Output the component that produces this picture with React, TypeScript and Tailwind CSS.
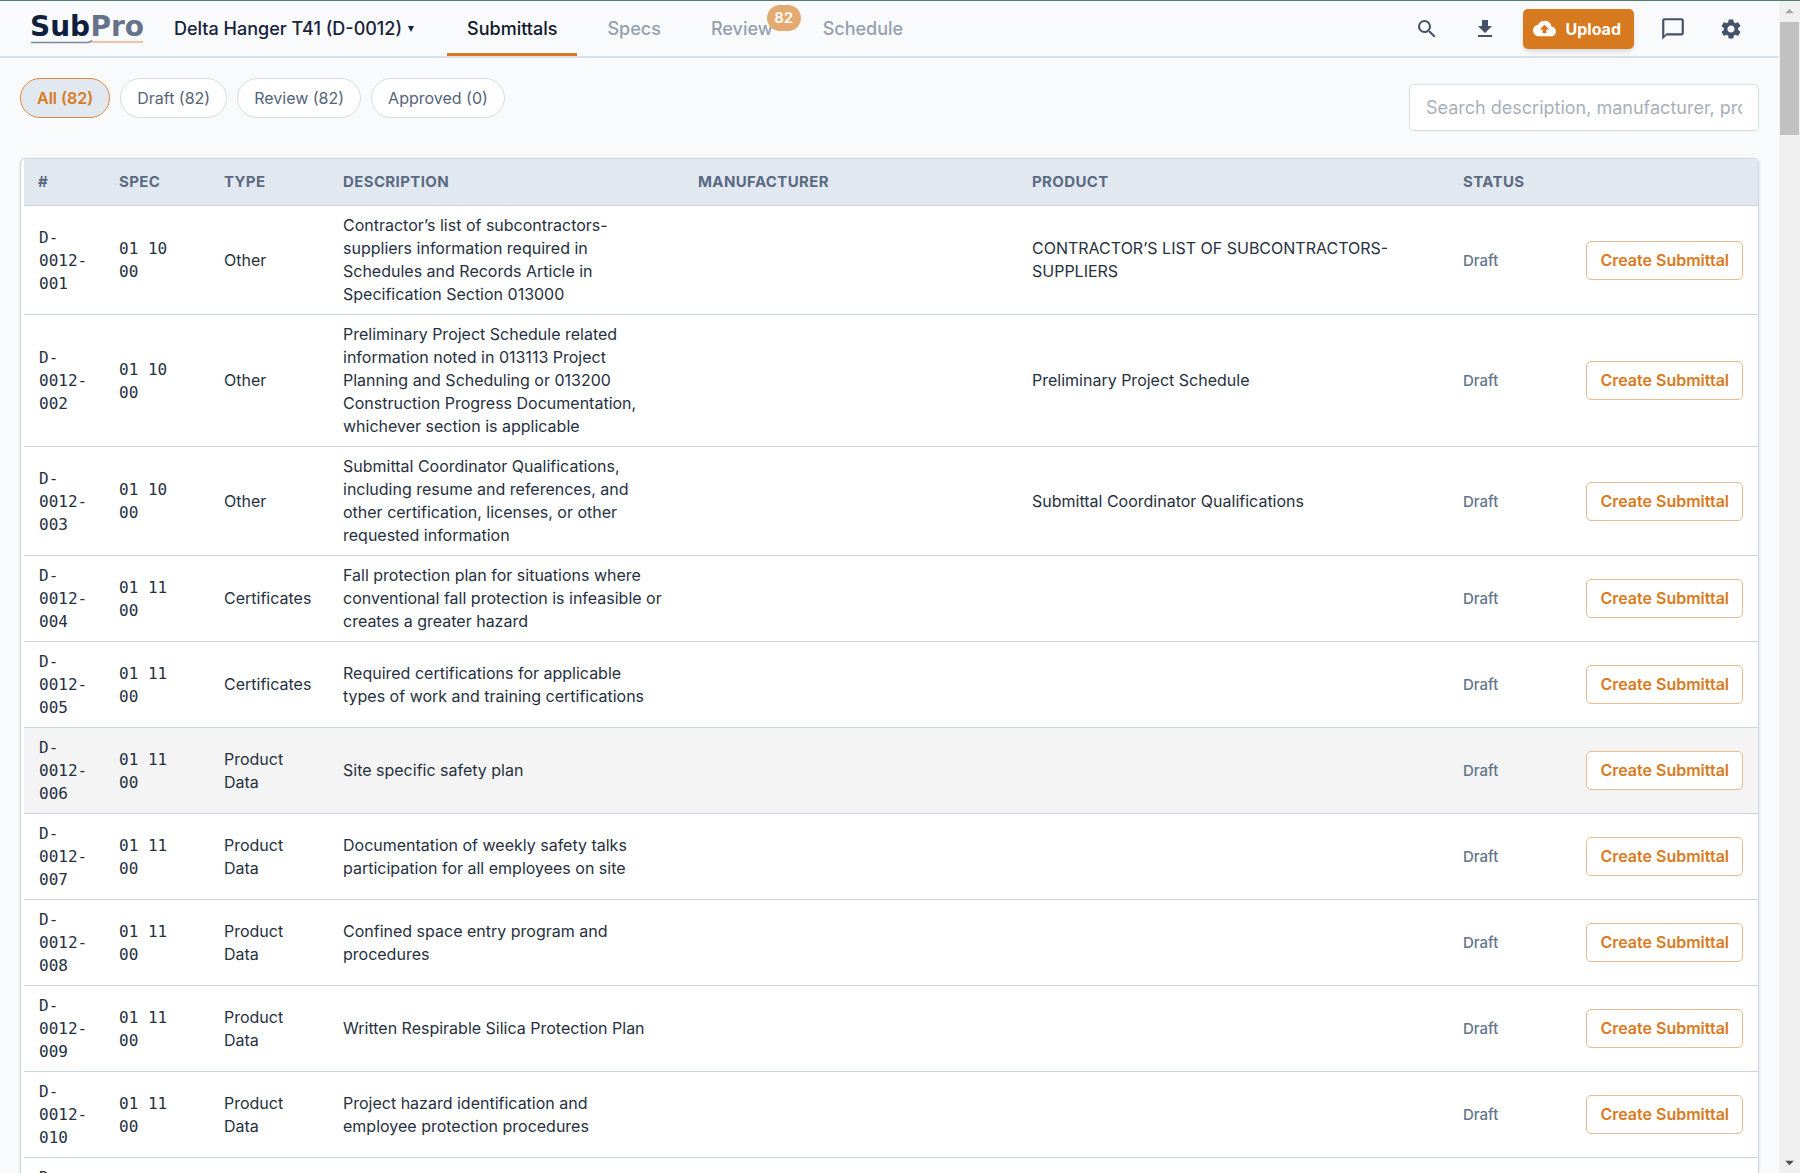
import React from "react";
import {
  MdSearch,
  MdFileDownload,
  MdCloudUpload,
  MdChatBubbleOutline,
  MdSettings,
  MdArrowDropDown,
  MdArrowDropUp,
} from "react-icons/md";

type Submittal = {
  id: string;
  spec: string;
  type: string;
  description: string;
  manufacturer?: string;
  product?: string;
  highlighted?: boolean;
};

const submittals: Submittal[] = [
  {
    id: "D-0012-001",
    spec: "01 10 00",
    type: "Other",
    description:
      "Contractor’s list of subcontractors-suppliers information required in Schedules and Records Article in Specification Section 013000",
    product: "CONTRACTOR’S LIST OF SUBCONTRACTORS-SUPPLIERS",
  },
  {
    id: "D-0012-002",
    spec: "01 10 00",
    type: "Other",
    description:
      "Preliminary Project Schedule related information noted in 013113 Project Planning and Scheduling or 013200 Construction Progress Documentation, whichever section is applicable",
    product: "Preliminary Project Schedule",
  },
  {
    id: "D-0012-003",
    spec: "01 10 00",
    type: "Other",
    description:
      "Submittal Coordinator Qualifications, including resume and references, and other certification, licenses, or other requested information",
    product: "Submittal Coordinator Qualifications",
  },
  {
    id: "D-0012-004",
    spec: "01 11 00",
    type: "Certificates",
    description:
      "Fall protection plan for situations where conventional fall protection is infeasible or creates a greater hazard",
  },
  {
    id: "D-0012-005",
    spec: "01 11 00",
    type: "Certificates",
    description: "Required certifications for applicable types of work and training certifications",
  },
  {
    id: "D-0012-006",
    spec: "01 11 00",
    type: "Product Data",
    description: "Site specific safety plan",
    highlighted: true,
  },
  {
    id: "D-0012-007",
    spec: "01 11 00",
    type: "Product Data",
    description: "Documentation of weekly safety talks participation for all employees on site",
  },
  {
    id: "D-0012-008",
    spec: "01 11 00",
    type: "Product Data",
    description: "Confined space entry program and procedures",
  },
  {
    id: "D-0012-009",
    spec: "01 11 00",
    type: "Product Data",
    description: "Written Respirable Silica Protection Plan",
  },
  {
    id: "D-0012-010",
    spec: "01 11 00",
    type: "Product Data",
    description: "Project hazard identification and employee protection procedures",
  },
  {
    id: "D-0012-011",
    spec: "01 11 00",
    type: "Product Data",
    description: "",
  },
];

const filters = ["All (82)", "Draft (82)", "Review (82)", "Approved (0)"];

function Logo() {
  return (
    <a href="#home" aria-label="SubPro home" className="ml-[30px] flex w-[114px] flex-col">
      <span className="flex justify-between font-['DejaVu_Sans'] text-[28px] leading-[26px] font-bold">
        <span className="text-[#0f1f3d]">Sub</span>
        <span className="text-[#66728a]">Pro</span>
      </span>
      <svg viewBox="0 0 114 4" className="h-1 w-full" fill="none" aria-hidden="true">
        <path d="M1 2.5H58Q60 2.5 62 .5" stroke="#7d879a" strokeWidth="1.5" />
        <path d="M62 2H113" stroke="#f0ae85" strokeWidth="1.5" />
      </svg>
    </a>
  );
}

function Header() {
  const tab = "relative flex items-center border-y-[3px] border-t-transparent px-5 text-[18px] font-medium";
  return (
    <header className="flex h-[57px] shrink-0 items-stretch border-b-2 border-[#d9e2ec]">
      <div className="flex items-center">
        <Logo />
        <button className="ml-[30px] flex items-center gap-[6px] text-[18px] font-medium text-[#16213a]">
          Delta Hanger T41 (D-0012)
          <svg viewBox="0 0 6 6" className="h-[6px] w-[6px]" fill="currentColor" aria-hidden="true">
            <path d="M0 0H6L3 6Z" />
          </svg>
        </button>
      </div>
      <nav className="ml-[33px] flex gap-[10px]">
        <a href="#submittals" className={`${tab} border-b-[#d97a20] text-[#0f172a]`}>
          Submittals
        </a>
        <a href="#specs" className={`${tab} border-b-transparent text-[#94a0b0]`}>
          Specs
        </a>
        <a href="#review" className={`${tab} border-b-transparent text-[#94a0b0]`}>
          Review
          <span className="absolute top-px right-[-8px] flex h-[26px] w-[34px] items-center justify-center rounded-full bg-[#e5aa71] text-[15px] font-semibold text-white">
            82
          </span>
        </a>
        <a href="#schedule" className={`${tab} border-b-transparent text-[#94a0b0]`}>
          Schedule
        </a>
      </nav>
      <div className="ml-auto flex items-center pr-[36px] text-[#435268]">
        <button aria-label="Search">
          <MdSearch className="h-6 w-6" />
        </button>
        <button aria-label="Download" className="ml-[34px]">
          <MdFileDownload className="h-6 w-6" />
        </button>
        <button className="ml-[26px] flex h-10 items-center gap-[10px] rounded-[5px] bg-[#d7791f] px-[10px] text-[16px] font-bold text-white shadow-md">
          <MdCloudUpload className="h-[23px] w-[23px]" />
          <span className="pr-[3px]">Upload</span>
        </button>
        <button aria-label="Comments" className="ml-[26px]">
          <MdChatBubbleOutline className="h-[26px] w-[26px]" />
        </button>
        <button aria-label="Settings" className="ml-[33px]">
          <MdSettings className="h-6 w-6" />
        </button>
      </div>
    </header>
  );
}

function Toolbar() {
  return (
    <div className="flex items-start justify-between pt-5 pr-5 pb-[27px] pl-5">
      <div className="flex gap-[10px]">
        {filters.map((label, i) => (
          <button
            key={label}
            className={`h-[40px] rounded-full border px-4 text-[16px] ${
              i === 0
                ? "border-[#dd8a3c] bg-[#e2e8f0] font-semibold text-[#d97a20]"
                : "border-[#d3dde8] bg-white text-[#54637a]"
            }`}
          >
            {label}
          </button>
        ))}
      </div>
      <input
        type="text"
        aria-label="Search submittals"
        placeholder="Search description, manufacturer, product"
        className="mt-[6px] h-[47px] w-[350px] rounded-[5px] border border-[#d3dde8] bg-white px-4 text-[18px] text-[#334155] placeholder:text-[#a9b0ba]"
      />
    </div>
  );
}

function SubmittalTable() {
  const head = "px-[14px] py-3 text-left text-[15px] leading-[22px] font-bold text-[#5a6a83] tracking-wide";
  const cell = "px-[14px] py-2 align-middle";
  return (
    <div className="mr-5 ml-5 rounded-[5px] border border-[#cbd5e1] bg-white pl-[3px] shadow-sm">
      <table className="w-full table-fixed border-collapse text-[16px] leading-[23px] text-[#263040]">
        <colgroup>
          <col className="w-[81px]" />
          <col className="w-[105px]" />
          <col className="w-[119px]" />
          <col className="w-[355px]" />
          <col className="w-[334px]" />
          <col />
          <col className="w-[124px]" />
          <col className="w-[185px]" />
        </colgroup>
        <thead>
          <tr className="border-b border-[#cbd5e1] bg-[#e2e8f0]">
            <th className={head}>#</th>
            <th className={head}>SPEC</th>
            <th className={head}>TYPE</th>
            <th className={head}>DESCRIPTION</th>
            <th className={head}>MANUFACTURER</th>
            <th className={head}>PRODUCT</th>
            <th className={head}>STATUS</th>
            <th className={head} aria-label="Actions" />
          </tr>
        </thead>
        <tbody>
          {submittals.map((s) => (
            <tr
              key={s.id}
              className={`border-b border-[#cbd5e1] ${s.highlighted ? "bg-[#f4f4f4]" : "bg-white"}`}
            >
              <td className="py-2 pr-3 pl-[15px] align-middle font-['DejaVu_Sans_Mono',monospace]">{s.id}</td>
              <td className="py-2 pr-5 pl-[14px] align-middle font-['DejaVu_Sans_Mono',monospace]">{s.spec}</td>
              <td className={cell}>{s.type}</td>
              <td className="py-2 pr-[22px] pl-[14px] align-middle">{s.description}</td>
              <td className={cell}>{s.manufacturer}</td>
              <td className={cell}>{s.product}</td>
              <td className={`${cell} text-[15px] font-medium text-[#64748b]`}>Draft</td>
              <td className="py-2 pr-[15px] text-right align-middle">
                <button className="h-[39px] rounded-[5px] border border-[#ecbc8e] bg-white px-[13px] text-[16px] font-semibold whitespace-nowrap text-[#d97a20]">
                  Create Submittal
                </button>
              </td>
            </tr>
          ))}
        </tbody>
      </table>
    </div>
  );
}

function ScrollRail() {
  return (
    <div className="flex w-[21px] shrink-0 flex-col items-center bg-[#f0f0f0]" aria-hidden="true">
      <MdArrowDropUp className="h-[21px] w-[21px] shrink-0 text-[#a3a3a3]" />
      <div className="h-[113px] w-[19px] bg-[#c1c1c1]" />
      <MdArrowDropDown className="mt-auto h-[21px] w-[21px] shrink-0 text-[#505050]" />
    </div>
  );
}

export default function App() {
  return (
    <div className="flex h-screen flex-col overflow-hidden border-t border-[#557a70] bg-[#f9fafc] font-['Inter',sans-serif]">
      <div className="flex min-h-0 flex-1">
        <main className="flex min-w-0 flex-1 flex-col overflow-hidden">
          <Header />
          <Toolbar />
          <SubmittalTable />
        </main>
        <ScrollRail />
      </div>
    </div>
  );
}
